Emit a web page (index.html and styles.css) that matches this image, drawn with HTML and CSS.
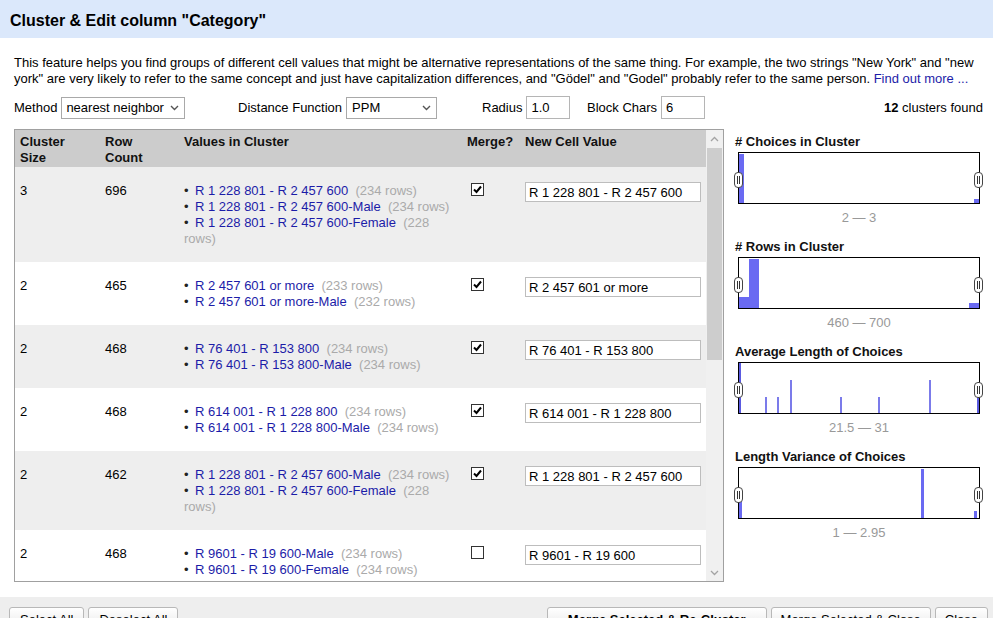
FILE: index.html
```html
<!DOCTYPE html>
<html>
<head>
<meta charset="utf-8">
<title>Cluster &amp; Edit</title>
<link rel="stylesheet" href="styles.css">
</head>
<body>
<div class="dialog">
  <div class="dlg-header">Cluster &amp; Edit column "Category"</div>

  <p class="intro">This feature helps you find groups of different cell values that might be alternative representations of the same thing. For example, the two strings "New York" and "new york" are very likely to refer to the same concept and just have capitalization differences, and "Gödel" and "Godel" probably refer to the same person. <a class="link" href="#">Find out more ...</a></p>

  <div class="controls">
    <div class="ctl"><span>Method</span>
      <div class="sel sel-method"><span>nearest neighbor</span><svg class="chev" width="9" height="6" viewBox="0 0 9 6"><path d="M1 1 L4.5 4.5 L8 1" fill="none" stroke="#555" stroke-width="1.4"/></svg></div>
    </div>
    <div class="ctl"><span>Distance Function</span>
      <div class="sel sel-dist"><span>PPM</span><svg class="chev" width="9" height="6" viewBox="0 0 9 6"><path d="M1 1 L4.5 4.5 L8 1" fill="none" stroke="#555" stroke-width="1.4"/></svg></div>
    </div>
    <div class="ctl"><span>Radius</span><input class="num" type="text" value="1.0"></div>
    <div class="ctl"><span>Block Chars</span><input class="num" type="text" value="6"></div>
    <div class="found"><b>12</b> clusters found</div>
  </div>

  <div class="main">
    <div class="table-box">
      <div class="table-scroll">
        <table class="clusters">
          <colgroup><col class="c1"><col class="c2"><col class="c3"><col class="c4"><col class="c5"></colgroup>
          <thead>
            <tr><th>Cluster<br>Size</th><th>Row<br>Count</th><th>Values in Cluster</th><th>Merge?</th><th>New Cell Value</th></tr>
          </thead>
          <tbody>
            <tr class="odd">
              <td>3</td><td>696</td>
              <td><ul class="vals">
                <li><a class="link" href="#">R 1 228 801 - R 2 457 600</a>&nbsp; <span class="cnt">(234 rows)</span></li>
                <li><a class="link" href="#">R 1 228 801 - R 2 457 600-Male</a>&nbsp; <span class="cnt">(234 rows)</span></li>
                <li><a class="link" href="#">R 1 228 801 - R 2 457 600-Female</a>&nbsp; <span class="cnt">(228 rows)</span></li>
              </ul></td>
              <td><span class="cb on"><svg width="11" height="11" viewBox="0 0 11 11"><path d="M2 5.5 L4.5 8 L9 2.5" fill="none" stroke="#000" stroke-width="2"/></svg></span></td>
              <td><input class="newval" type="text" value="R 1 228 801 - R 2 457 600"></td>
            </tr>
            <tr class="even">
              <td>2</td><td>465</td>
              <td><ul class="vals">
                <li><a class="link" href="#">R 2 457 601 or more</a>&nbsp; <span class="cnt">(233 rows)</span></li>
                <li><a class="link" href="#">R 2 457 601 or more-Male</a>&nbsp; <span class="cnt">(232 rows)</span></li>
              </ul></td>
              <td><span class="cb on"><svg width="11" height="11" viewBox="0 0 11 11"><path d="M2 5.5 L4.5 8 L9 2.5" fill="none" stroke="#000" stroke-width="2"/></svg></span></td>
              <td><input class="newval" type="text" value="R 2 457 601 or more"></td>
            </tr>
            <tr class="odd">
              <td>2</td><td>468</td>
              <td><ul class="vals">
                <li><a class="link" href="#">R 76 401 - R 153 800</a>&nbsp; <span class="cnt">(234 rows)</span></li>
                <li><a class="link" href="#">R 76 401 - R 153 800-Male</a>&nbsp; <span class="cnt">(234 rows)</span></li>
              </ul></td>
              <td><span class="cb on"><svg width="11" height="11" viewBox="0 0 11 11"><path d="M2 5.5 L4.5 8 L9 2.5" fill="none" stroke="#000" stroke-width="2"/></svg></span></td>
              <td><input class="newval" type="text" value="R 76 401 - R 153 800"></td>
            </tr>
            <tr class="even">
              <td>2</td><td>468</td>
              <td><ul class="vals">
                <li><a class="link" href="#">R 614 001 - R 1 228 800</a>&nbsp; <span class="cnt">(234 rows)</span></li>
                <li><a class="link" href="#">R 614 001 - R 1 228 800-Male</a>&nbsp; <span class="cnt">(234 rows)</span></li>
              </ul></td>
              <td><span class="cb on"><svg width="11" height="11" viewBox="0 0 11 11"><path d="M2 5.5 L4.5 8 L9 2.5" fill="none" stroke="#000" stroke-width="2"/></svg></span></td>
              <td><input class="newval" type="text" value="R 614 001 - R 1 228 800"></td>
            </tr>
            <tr class="odd">
              <td>2</td><td>462</td>
              <td><ul class="vals">
                <li><a class="link" href="#">R 1 228 801 - R 2 457 600-Male</a>&nbsp; <span class="cnt">(234 rows)</span></li>
                <li><a class="link" href="#">R 1 228 801 - R 2 457 600-Female</a>&nbsp; <span class="cnt">(228 rows)</span></li>
              </ul></td>
              <td><span class="cb on"><svg width="11" height="11" viewBox="0 0 11 11"><path d="M2 5.5 L4.5 8 L9 2.5" fill="none" stroke="#000" stroke-width="2"/></svg></span></td>
              <td><input class="newval" type="text" value="R 1 228 801 - R 2 457 600"></td>
            </tr>
            <tr class="even">
              <td>2</td><td>468</td>
              <td><ul class="vals">
                <li><a class="link" href="#">R 9601 - R 19 600-Male</a>&nbsp; <span class="cnt">(234 rows)</span></li>
                <li><a class="link" href="#">R 9601 - R 19 600-Female</a>&nbsp; <span class="cnt">(234 rows)</span></li>
              </ul></td>
              <td><span class="cb"></span></td>
              <td><input class="newval" type="text" value="R 9601 - R 19 600"></td>
            </tr>
            <tr class="odd">
              <td>2</td><td>468</td>
              <td><ul class="vals">
                <li><a class="link" href="#">R 19 601 - R 38 400</a>&nbsp; <span class="cnt">(234 rows)</span></li>
                <li><a class="link" href="#">R 19 601 - R 38 400-Male</a>&nbsp; <span class="cnt">(234 rows)</span></li>
              </ul></td>
              <td><span class="cb"></span></td>
              <td><input class="newval" type="text" value="R 19 601 - R 38 400"></td>
            </tr>
          </tbody>
        </table>
      </div>
      <div class="vscroll">
        <div class="sb-btn"><svg width="9" height="6" viewBox="0 0 9 6"><path d="M1 5 L4.5 1.5 L8 5" fill="none" stroke="#a3a3a3" stroke-width="1.3"/></svg></div>
        <div class="sb-track"><div class="sb-thumb"></div></div>
        <div class="sb-btn"><svg width="9" height="6" viewBox="0 0 9 6"><path d="M1 1 L4.5 4.5 L8 1" fill="none" stroke="#a3a3a3" stroke-width="1.3"/></svg></div>
      </div>
    </div>

    <div class="facets">
      <div class="facet">
        <div class="facet-title"># Choices in Cluster</div>
        <div class="hist">
          <svg width="240" height="50" viewBox="0 0 240 50">
            <rect x="0" y="1" width="5" height="49" fill="#6a6af2"/>
            <rect x="235" y="46" width="5" height="4" fill="#6a6af2"/>
          </svg>
          <span class="handle hl"><svg width="9" height="16" viewBox="0 0 9 16"><rect x="0.5" y="0.5" width="8" height="15" rx="3.5" fill="#fff" stroke="#444"/><path d="M3.5 4 V12 M5.5 4 V12" stroke="#333" stroke-width="1"/></svg></span>
          <span class="handle hr"><svg width="9" height="16" viewBox="0 0 9 16"><rect x="0.5" y="0.5" width="8" height="15" rx="3.5" fill="#fff" stroke="#444"/><path d="M3.5 4 V12 M5.5 4 V12" stroke="#333" stroke-width="1"/></svg></span>
        </div>
        <div class="facet-range">2 — 3</div>
      </div>

      <div class="facet">
        <div class="facet-title"># Rows in Cluster</div>
        <div class="hist">
          <svg width="240" height="50" viewBox="0 0 240 50">
            <rect x="0" y="39" width="10" height="11" fill="#6a6af2"/>
            <rect x="10" y="1" width="10" height="49" fill="#6a6af2"/>
            <rect x="230" y="45" width="10" height="5" fill="#6a6af2"/>
          </svg>
          <span class="handle hl"><svg width="9" height="16" viewBox="0 0 9 16"><rect x="0.5" y="0.5" width="8" height="15" rx="3.5" fill="#fff" stroke="#444"/><path d="M3.5 4 V12 M5.5 4 V12" stroke="#333" stroke-width="1"/></svg></span>
          <span class="handle hr"><svg width="9" height="16" viewBox="0 0 9 16"><rect x="0.5" y="0.5" width="8" height="15" rx="3.5" fill="#fff" stroke="#444"/><path d="M3.5 4 V12 M5.5 4 V12" stroke="#333" stroke-width="1"/></svg></span>
        </div>
        <div class="facet-range">460 — 700</div>
      </div>

      <div class="facet">
        <div class="facet-title">Average Length of Choices</div>
        <div class="hist">
          <svg width="240" height="50" viewBox="0 0 240 50">
            <rect x="0" y="0" width="2" height="50" fill="#5a5ae0"/>
            <rect x="26" y="34" width="2" height="16" fill="#7b7bea"/>
            <rect x="38" y="34" width="2" height="16" fill="#7b7bea"/>
            <rect x="51" y="17" width="2" height="33" fill="#7b7bea"/>
            <rect x="101" y="34" width="2" height="16" fill="#7b7bea"/>
            <rect x="139" y="34" width="2" height="16" fill="#7b7bea"/>
            <rect x="190" y="17" width="2" height="33" fill="#7b7bea"/>
            <rect x="238" y="34" width="2" height="16" fill="#5a5ae0"/>
          </svg>
          <span class="handle hl"><svg width="9" height="16" viewBox="0 0 9 16"><rect x="0.5" y="0.5" width="8" height="15" rx="3.5" fill="#fff" stroke="#444"/><path d="M3.5 4 V12 M5.5 4 V12" stroke="#333" stroke-width="1"/></svg></span>
          <span class="handle hr"><svg width="9" height="16" viewBox="0 0 9 16"><rect x="0.5" y="0.5" width="8" height="15" rx="3.5" fill="#fff" stroke="#444"/><path d="M3.5 4 V12 M5.5 4 V12" stroke="#333" stroke-width="1"/></svg></span>
        </div>
        <div class="facet-range">21.5 — 31</div>
      </div>

      <div class="facet">
        <div class="facet-title">Length Variance of Choices</div>
        <div class="hist">
          <svg width="240" height="50" viewBox="0 0 240 50">
            <rect x="0" y="33" width="3" height="17" fill="#6a6af2"/>
            <rect x="182" y="1" width="3" height="49" fill="#6a6af2"/>
            <rect x="235" y="43" width="3" height="7" fill="#6a6af2"/>
          </svg>
          <span class="handle hl"><svg width="9" height="16" viewBox="0 0 9 16"><rect x="0.5" y="0.5" width="8" height="15" rx="3.5" fill="#fff" stroke="#444"/><path d="M3.5 4 V12 M5.5 4 V12" stroke="#333" stroke-width="1"/></svg></span>
          <span class="handle hr"><svg width="9" height="16" viewBox="0 0 9 16"><rect x="0.5" y="0.5" width="8" height="15" rx="3.5" fill="#fff" stroke="#444"/><path d="M3.5 4 V12 M5.5 4 V12" stroke="#333" stroke-width="1"/></svg></span>
        </div>
        <div class="facet-range">1 — 2.95</div>
      </div>
    </div>
  </div>

  <div class="dlg-footer">
    <div class="btn-group">
      <button class="btn btn-left" type="button">Select All</button>
      <button class="btn btn-left" type="button">Deselect All</button>
    </div>
    <div class="btn-group">
      <button class="btn btn-strong" type="button">Merge Selected &amp; Re-Cluster</button>
      <button class="btn" type="button">Merge Selected &amp; Close</button>
      <button class="btn" type="button">Close</button>
    </div>
  </div>
</div>
</body>
</html>
```
FILE: styles.css
```css
html, body {
  margin: 0;
  padding: 0;
  overflow: hidden;
}
body {
  width: 993px;
  height: 618px;
  background: #fff;
  color: #000;
  font-family: "Liberation Sans", Arial, sans-serif;
  font-size: 13px;
}
.dialog {
  display: flex;
  flex-direction: column;
}
.dlg-header {
  height: 38px;
  box-sizing: border-box;
  padding: 11px 0 0 10px;
  background: #dbe8fb;
  font-size: 16px;
  font-weight: bold;
  line-height: 19px;
}
.link {
  color: #1c1ca8;
  text-decoration: none;
}
.intro {
  margin: 17px 10px 0 14px;
  line-height: 16px;
}

/* controls */
.controls {
  margin-top: 9px;
  padding: 0 10px 0 14px;
  height: 23px;
  display: grid;
  grid-template-columns: 224px 244px 105px auto 1fr;
  align-items: center;
}
.ctl {
  display: flex;
  align-items: center;
  gap: 4px;
}
.sel {
  height: 22px;
  box-sizing: border-box;
  border: 1px solid #a9a9a9;
  background: #fff;
  display: flex;
  align-items: center;
  justify-content: space-between;
  padding: 0 4px 0 4px;
}
.sel-method { width: 124px; }
.sel-dist { width: 91px; padding-left: 5px; }
.chev { margin-right: 1px; }
.num {
  box-sizing: border-box;
  height: 23px;
  width: 44px;
  border: 1px solid #b5b5b5;
  padding: 0 4px;
  margin: 0;
  font-family: "Liberation Sans", Arial, sans-serif;
  font-size: 13px;
  color: #000;
  background: #fff;
}
.found {
  justify-self: end;
}

/* main */
.main {
  margin-top: 10px;
  display: flex;
  height: 453px;
}
.table-box {
  margin-left: 14px;
  width: 710px;
  height: 453px;
  box-sizing: border-box;
  border: 1px solid #a0a0a0;
  display: flex;
}
.table-scroll {
  width: 691px;
  overflow: hidden;
}
.clusters {
  width: 691px;
  border-collapse: collapse;
  table-layout: fixed;
}
.c1 { width: 85px; }
.c2 { width: 79px; }
.c3 { width: 283px; }
.c4 { width: 58px; }
.c5 { width: 186px; }
.clusters th {
  background: #cccccc;
  text-align: left;
  vertical-align: top;
  font-weight: bold;
  line-height: 16px;
  padding: 4px 5px 1px;
  color: #111;
}
.clusters td {
  vertical-align: top;
  padding: 16px 5px 15px;
  line-height: 16px;
}
.clusters tr.odd td { background: #eeeeee; }
.clusters tr.even td { background: #ffffff; }
.vals {
  margin: 0;
  padding: 0;
  list-style: none;
}
.vals li { line-height: 16px; }
.vals li::before {
  content: "\2022";
  display: inline-block;
  width: 11px;
  color: #222;
}
.cnt { color: #aaaaaa; }
.cb {
  display: block;
  width: 13px;
  height: 13px;
  box-sizing: border-box;
  border: 1px solid #333;
  background: #fff;
  margin: 0 0 0 4px;
}
.cb svg { display: block; margin: 0; }
.newval {
  display: block;
  box-sizing: border-box;
  width: 176px;
  height: 20px;
  margin: -1px 0 0;
  border: 1px solid #bdbdbd;
  padding: 0 3px;
  font-family: "Liberation Sans", Arial, sans-serif;
  font-size: 13px;
  color: #000;
  background: #fff;
}

/* scrollbar */
.vscroll {
  width: 17px;
  display: flex;
  flex-direction: column;
  background: #f0f0f0;
}
.sb-btn {
  height: 17px;
  display: flex;
  align-items: center;
  justify-content: center;
}
.sb-track {
  flex: 1;
}
.sb-thumb {
  margin: 1px 1px 0;
  height: 212px;
  background: #cdcdcd;
}

/* facets */
.facets {
  padding: 5px 0 0 11px;
}
.facet {
  margin-bottom: 13px;
}
.facet-title {
  font-weight: bold;
  line-height: 16px;
  color: #111;
}
.hist {
  position: relative;
  margin: 2px 0 0 3px;
  width: 242px;
  height: 52px;
  box-sizing: border-box;
  border: 1px solid #000;
  background: #fff;
}
.hist > svg { display: block; }
.handle {
  position: absolute;
  top: 19px;
  width: 9px;
  height: 16px;
}
.handle svg { display: block; }
.hl { left: -5px; }
.hr { left: 235px; }
.facet-range {
  margin: 6px 0 0 3px;
  width: 242px;
  text-align: center;
  color: #999;
  line-height: 16px;
}

/* footer */
.dlg-footer {
  margin-top: 15px;
  background: #eeeeee;
  height: 40px;
  padding: 10px 5px 0 9px;
  display: flex;
  justify-content: space-between;
  align-items: flex-start;
}
.btn-group {
  display: flex;
  gap: 4px;
}
.btn {
  font-family: "Liberation Sans", Arial, sans-serif;
  font-size: 13px;
  line-height: 15px;
  color: #000;
  padding: 4px 9px;
  border: 1px solid #b8b8b8;
  border-radius: 3px;
  background: linear-gradient(#ffffff, #e6e6e6);
}
.btn-left {
  padding: 4px 10px;
}
.btn-strong {
  font-weight: bold;
  padding: 4px 20px;
}
```
